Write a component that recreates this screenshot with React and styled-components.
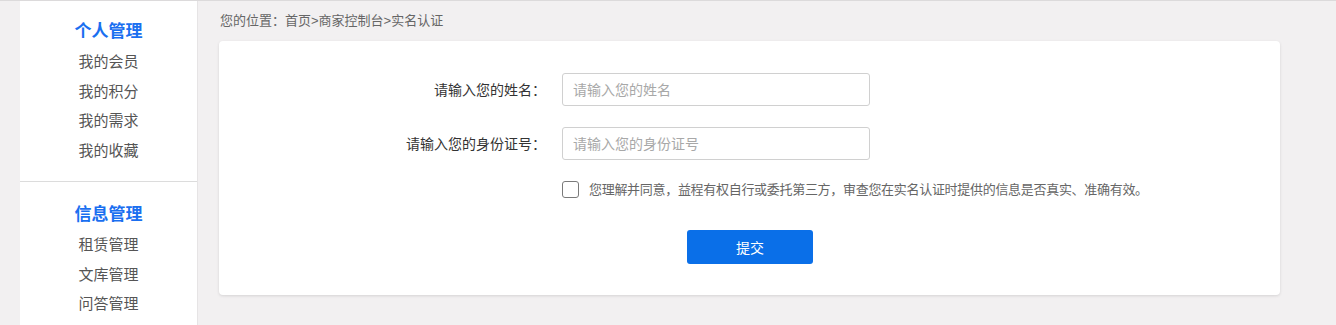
import React from 'react';
import styled, { createGlobalStyle } from 'styled-components';

const GlobalStyle = createGlobalStyle`
  html, body {
    margin: 0;
    padding: 0;
    background: #f2f0f1;
    font-family: "Liberation Sans", "Noto Sans CJK SC", sans-serif;
  }
  * {
    box-sizing: border-box;
  }
`;

const SIDEBAR = [
  { title: '个人管理', items: ['我的会员', '我的积分', '我的需求', '我的收藏'] },
  { title: '信息管理', items: ['租赁管理', '文库管理', '问答管理'] },
];

const Page = styled.div`
  min-height: 325px;
  border-top: 1px solid #dcdadb;
  display: flex;
  align-items: flex-start;
  padding: 0 56px 0 20px;
  gap: 21px;
`;

const Sidebar = styled.aside`
  width: 178px;
  flex-shrink: 0;
  background: #fff;
  border-right: 1px solid #e6e4e5;
  min-height: 330px;
`;

const Section = styled.div`
  padding: ${p => (p.$first ? '16px 0 16px' : '18px 0 16px')};
  border-bottom: ${p => (p.$first ? '1px solid #dcdcdc' : 'none')};
  text-align: center;
`;

const SectionTitle = styled.div`
  font-size: 17px;
  font-weight: bold;
  line-height: 30px;
  color: #1a6ff0;
`;

const NavItem = styled.div`
  font-size: 15px;
  line-height: 29.5px;
  color: #555;
  cursor: pointer;
`;

const Main = styled.main`
  flex: 1;
`;

const Crumb = styled.div`
  font-size: 13px;
  line-height: 20px;
  color: #666;
  padding: 10px 0 0 1px;
  margin-bottom: 10px;
`;

const Card = styled.div`
  background: #fff;
  border-radius: 4px;
  box-shadow: 0 1px 3px rgba(0, 0, 0, 0.12);
  padding: 32px 0 31px;
`;

const Form = styled.form`
  display: grid;
  grid-template-columns: 327px 308px;
  column-gap: 16px;
  row-gap: 21px;
  align-items: center;
`;

const Label = styled.label`
  font-size: 14px;
  line-height: 20px;
  color: #333;
  text-align: right;
`;

const Input = styled.input`
  height: 33px;
  border: 1px solid #d0d0d0;
  border-radius: 3px;
  padding: 0 10px;
  font-size: 14px;
  font-family: inherit;
  color: #333;
  outline: none;
  &::placeholder {
    color: #a8a8a8;
  }
`;

const Agree = styled.div`
  grid-column: 2 / 3;
  display: flex;
  align-items: center;
  gap: 10px;
  height: 17px;
  white-space: nowrap;
`;

const Box = styled.span`
  width: 17px;
  height: 17px;
  border: 1px solid #7a7a7a;
  border-radius: 3px;
  flex-shrink: 0;
`;

const AgreeText = styled.span`
  font-size: 13px;
  line-height: 17px;
  letter-spacing: -0.3px;
  color: #666;
`;

const Submit = styled.button`
  grid-column: 2 / 3;
  justify-self: start;
  margin: 11px 0 0 125px;
  width: 126px;
  height: 34px;
  background: #0a6fe8;
  border: none;
  border-radius: 3px;
  color: #fff;
  font-size: 14px;
  font-family: inherit;
  cursor: pointer;
`;

export default function App() {
  return (
    <>
      <GlobalStyle />
      <Page>
        <Sidebar>
          {SIDEBAR.map((sec, i) => (
            <Section key={sec.title} $first={i === 0}>
              <SectionTitle>{sec.title}</SectionTitle>
              {sec.items.map(item => (
                <NavItem key={item}>{item}</NavItem>
              ))}
            </Section>
          ))}
        </Sidebar>
        <Main>
          <Crumb>您的位置：首页&gt;商家控制台&gt;实名认证</Crumb>
          <Card>
            <Form onSubmit={e => e.preventDefault()}>
              <Label>请输入您的姓名：</Label>
              <Input placeholder="请输入您的姓名" />
              <Label>请输入您的身份证号：</Label>
              <Input placeholder="请输入您的身份证号" />
              <Agree>
                <Box />
                <AgreeText>
                  您理解并同意，益程有权自行或委托第三方，审查您在实名认证时提供的信息是否真实、准确有效。
                </AgreeText>
              </Agree>
              <Submit type="submit">提交</Submit>
            </Form>
          </Card>
        </Main>
      </Page>
    </>
  );
}
